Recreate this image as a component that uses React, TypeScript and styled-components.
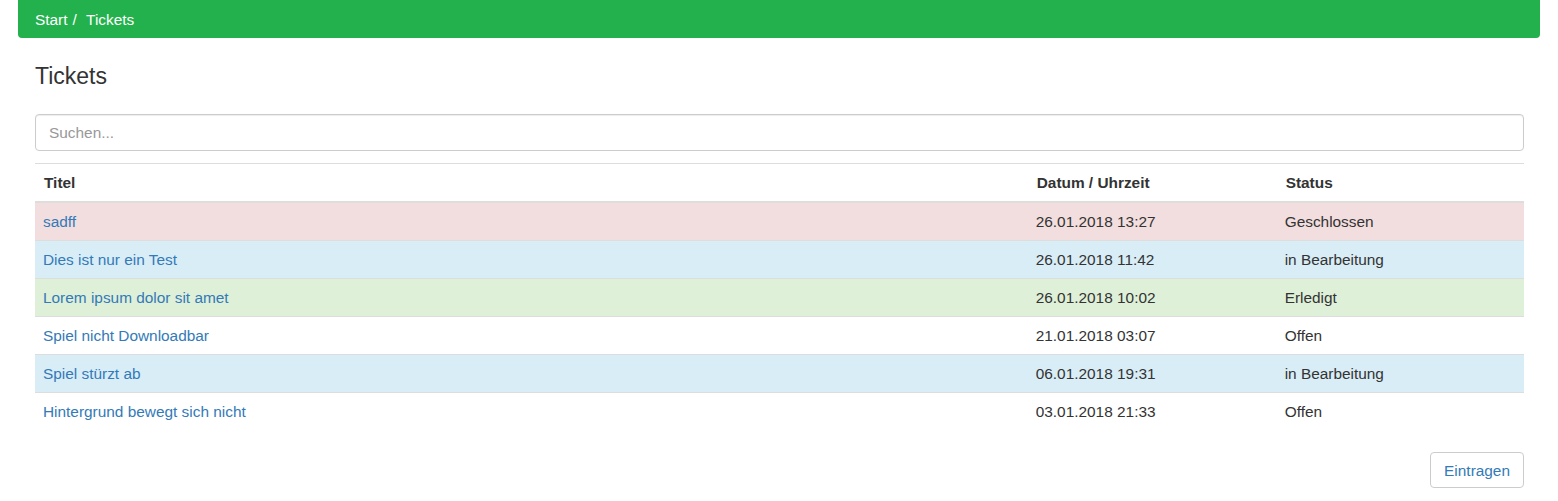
import React from "react";
import styled, { createGlobalStyle } from "styled-components";

const Global = createGlobalStyle`
  html, body { margin: 0; padding: 0; background: #fff; }
  body {
    font-family: "Liberation Sans", Arial, sans-serif;
    font-size: 15.4px;
    line-height: 21px;
    color: #333;
  }
  * { box-sizing: border-box; }
`;

const Page = styled.div`
  padding: 0 18px;
`;

const Breadcrumb = styled.ol`
  display: flex;
  list-style: none;
  margin: 0;
  padding: 9px 17px 8px;
  height: 38px;
  background: #22b14c;
  border-radius: 0 0 4px 4px;
  color: #fff;
`;

const Crumb = styled.li`
  & + &::before {
    content: "/\\00a0";
    padding: 0 5px;
    color: #fff;
  }
`;

const Content = styled.div`
  padding: 0 16px 0 17px;
`;

const Heading = styled.h3`
  margin: 26px 0 25px;
  font-size: 23px;
  font-weight: 500;
  line-height: 25px;
  color: #333;
`;

const Search = styled.input`
  display: block;
  width: 100%;
  height: 37px;
  padding: 7px 13px;
  font-family: inherit;
  font-size: 15.4px;
  color: #555;
  border: 1px solid #ccc;
  border-radius: 4px;
  box-shadow: inset 0 1px 1px rgba(0, 0, 0, 0.075);
  outline: none;
  &::placeholder { color: #999; }
`;

const Table = styled.table`
  width: 100%;
  margin-top: 12px;
  border-collapse: collapse;
  border-spacing: 0;
  table-layout: fixed;
`;

const Th = styled.th`
  text-align: left;
  font-weight: bold;
  padding: 8px 8px 8px 9px;
  border-top: 1px solid #ddd;
  border-bottom: 2px solid #ddd;
`;

const variants: Record<string, string> = {
  danger: "#f2dede",
  info: "#d9edf7",
  success: "#dff0d8",
  none: "transparent",
};

const Tr = styled.tr<{ $variant: string }>`
  background: ${(p) => variants[p.$variant]};
`;

const Td = styled.td`
  padding: 8px;
  border-top: 1px solid #ddd;
  vertical-align: top;
`;

const Link = styled.a`
  color: #337ab7;
  text-decoration: none;
`;

const Footer = styled.div`
  display: flex;
  justify-content: flex-end;
  margin-top: 22px;
`;

const Button = styled.button`
  font-family: inherit;
  font-size: 15.4px;
  line-height: 21px;
  padding: 6.5px 13px;
  color: #337ab7;
  background: #fff;
  border: 1px solid #ccc;
  border-radius: 4px;
  cursor: pointer;
`;

const rows = [
  { t: "sadff", d: "26.01.2018 13:27", s: "Geschlossen", v: "danger" },
  { t: "Dies ist nur ein Test", d: "26.01.2018 11:42", s: "in Bearbeitung", v: "info" },
  { t: "Lorem ipsum dolor sit amet", d: "26.01.2018 10:02", s: "Erledigt", v: "success" },
  { t: "Spiel nicht Downloadbar", d: "21.01.2018 03:07", s: "Offen", v: "none" },
  { t: "Spiel stürzt ab", d: "06.01.2018 19:31", s: "in Bearbeitung", v: "info" },
  { t: "Hintergrund bewegt sich nicht", d: "03.01.2018 21:33", s: "Offen", v: "none" },
];

export default function App() {
  return (
    <Page>
      <Global />
      <Breadcrumb>
        <Crumb>Start</Crumb>
        <Crumb>Tickets</Crumb>
      </Breadcrumb>
      <Content>
        <Heading>Tickets</Heading>
        <Search placeholder="Suchen..." />
        <Table>
          <colgroup>
            <col style={{ width: "66.67%" }} />
            <col style={{ width: "16.72%" }} />
            <col />
          </colgroup>
          <thead>
            <tr>
              <Th>Titel</Th>
              <Th>Datum / Uhrzeit</Th>
              <Th>Status</Th>
            </tr>
          </thead>
          <tbody>
            {rows.map((r) => (
              <Tr key={r.t} $variant={r.v}>
                <Td>
                  <Link href="#">{r.t}</Link>
                </Td>
                <Td>{r.d}</Td>
                <Td>{r.s}</Td>
              </Tr>
            ))}
          </tbody>
        </Table>
        <Footer>
          <Button>Eintragen</Button>
        </Footer>
      </Content>
    </Page>
  );
}
